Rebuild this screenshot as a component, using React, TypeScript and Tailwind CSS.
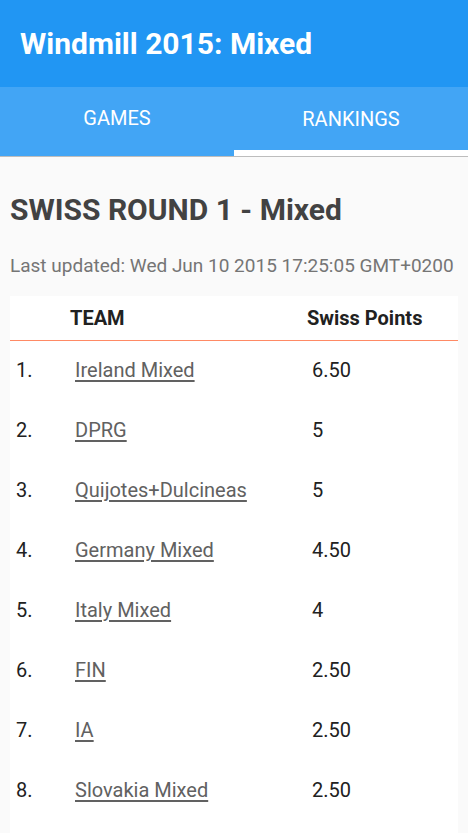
const rows = [
  { rank: 1, team: 'Ireland Mixed', points: '6.50' },
  { rank: 2, team: 'DPRG', points: '5' },
  { rank: 3, team: 'Quijotes+Dulcineas', points: '5' },
  { rank: 4, team: 'Germany Mixed', points: '4.50' },
  { rank: 5, team: 'Italy Mixed', points: '4' },
  { rank: 6, team: 'FIN', points: '2.50' },
  { rank: 7, team: 'IA', points: '2.50' },
  { rank: 8, team: 'Slovakia Mixed', points: '2.50' },
];

const App = () => {
  return (
    <div className="min-h-screen bg-[#fafafa] font-['Roboto',sans-serif]">
      <header className="bg-[#2196F3] h-[87px] flex items-center px-5">
        <h1 className="text-white text-[30px] leading-[36px] font-bold">Windmill 2015: Mixed</h1>
      </header>
      <nav className="bg-[#42A5F5] h-[70px] grid grid-cols-2 border-b border-[#bdbdbd]">
        <div className="flex items-center justify-center text-white text-[20px] pb-[7px]">GAMES</div>
        <div className="flex items-center justify-center text-white text-[20px] border-b-[6px] border-white">RANKINGS</div>
      </nav>
      <main className="px-[10px]">
        <h2 className="text-[#424242] text-[30px] font-bold mt-[35px] leading-[36px]">SWISS ROUND 1 - Mixed</h2>
        <p className="text-[#757575] text-[19px] leading-[24px] mt-[26px]">Last updated: Wed Jun 10 2015 17:25:05 GMT+0200</p>
        <div className="bg-white mt-[18px] pb-[20px]">
          <table className="w-full text-[20px] text-[#212121]">
            <thead>
              <tr className="h-[44px]">
                <th className="w-[60px] border-b border-[#FF8A65]"></th>
                <th className="text-left font-bold w-[237px] border-b border-[#FF8A65]">TEAM</th>
                <th className="text-left font-bold border-b border-[#FF8A65]">Swiss Points</th>
              </tr>
            </thead>
            <tbody>
              {rows.map((r) => (
                <tr key={r.rank} className="h-[60px]">
                  <td className="pl-[6px]">{r.rank}.</td>
                  <td className="pl-[5px]">
                    <a href="#" className="text-[#616161] underline underline-offset-[3px]">{r.team}</a>
                  </td>
                  <td className="pl-[5px]">{r.points}</td>
                </tr>
              ))}
            </tbody>
          </table>
        </div>
      </main>
    </div>
  );
};

export default App;
